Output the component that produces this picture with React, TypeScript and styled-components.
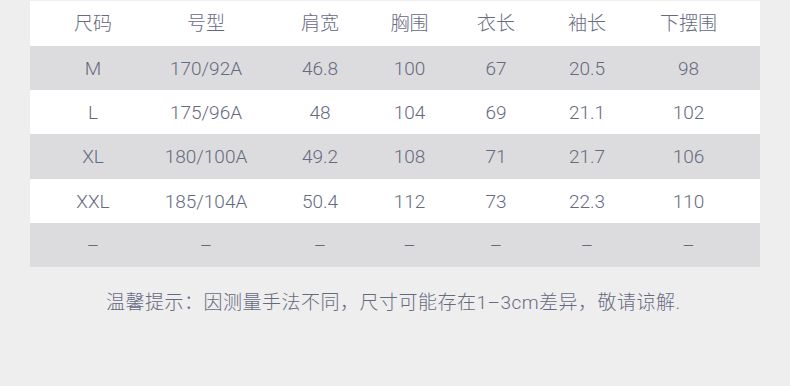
import React from 'react';
import styled, { createGlobalStyle } from 'styled-components';

const GlobalStyle = createGlobalStyle`
	html, body {
		margin: 0;
		padding: 0;
		background: #eeeeee;
	}
	body {
		font-family: Roboto, 'Liberation Sans', 'Noto Sans CJK SC', sans-serif;
		font-weight: 300;
		color: #666a7f;
	}
`;

const StyledPage = styled.div`
	width: 790px;
	height: 386px;
	padding: 1px 30px 0;
	box-sizing: border-box;
	background: #eeeeee;
	display: flex;
	flex-direction: column;
`;

const StyledTable = styled.div`
	display: flex;
	flex-direction: column;
	width: 730px;
`;

const StyledRow = styled.div<{ $shade: boolean; $height: number }>`
	display: grid;
	grid-template-columns: 126px 100px 128px 51px 122px 60px 1fr;
	align-items: center;
	height: ${({ $height }) => $height}px;
	background-color: ${({ $shade }) => ($shade ? '#dcdcde' : '#ffffff')};
`;

const StyledCell = styled.div`
	text-align: center;
	font-size: 19px;
	line-height: 1;
	white-space: nowrap;
`;

const StyledNote = styled.p`
	margin: 24px 0 0 76px;
	font-size: 19px;
	letter-spacing: 0.5px;
	line-height: 24px;
	white-space: nowrap;
`;

const header = ['尺码', '号型', '肩宽', '胸围', '衣长', '袖长', '下摆围'];

const rows = [
	['M', '170/92A', '46.8', '100', '67', '20.5', '98'],
	['L', '175/96A', '48', '104', '69', '21.1', '102'],
	['XL', '180/100A', '49.2', '108', '71', '21.7', '106'],
	['XXL', '185/104A', '50.4', '112', '73', '22.3', '110'],
	['–', '–', '–', '–', '–', '–', '–'],
];

const heights = [45, 44, 44, 45, 44, 44];

export default function App() {
	return (
		<>
			<GlobalStyle />
			<StyledPage>
				<StyledTable>
					{[header, ...rows].map((row, i) => (
						<StyledRow key={i} $shade={i % 2 === 1} $height={heights[i]}>
							{row.map((cell, j) => (
								<StyledCell key={j}>{cell}</StyledCell>
							))}
						</StyledRow>
					))}
				</StyledTable>
				<StyledNote>温馨提示：因测量手法不同，尺寸可能存在1–3cm差异，敬请谅解.</StyledNote>
			</StyledPage>
		</>
	);
}
